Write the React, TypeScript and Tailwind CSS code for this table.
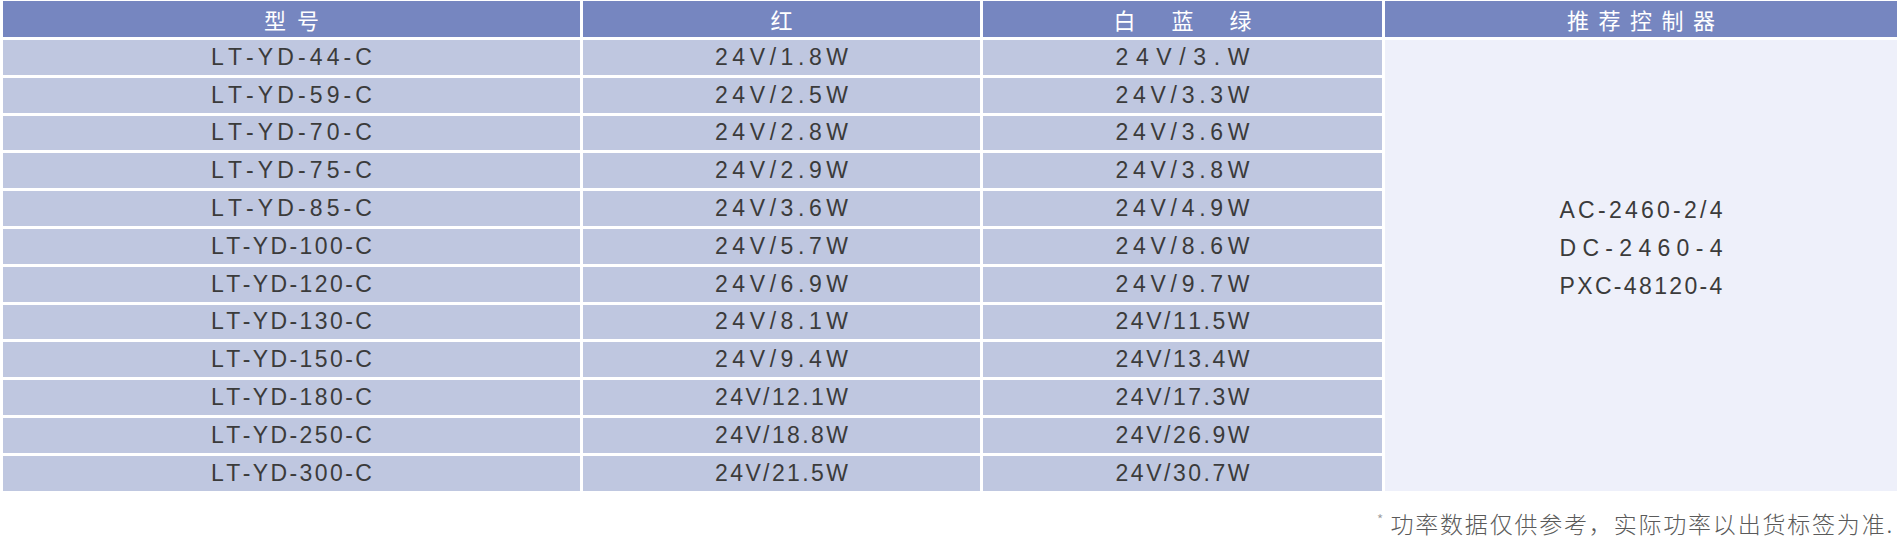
const ROWS = [
  { model: 'LT-YD-44-C', red: '24V/1.8W', rgb: '24V/3.W' },
  { model: 'LT-YD-59-C', red: '24V/2.5W', rgb: '24V/3.3W' },
  { model: 'LT-YD-70-C', red: '24V/2.8W', rgb: '24V/3.6W' },
  { model: 'LT-YD-75-C', red: '24V/2.9W', rgb: '24V/3.8W' },
  { model: 'LT-YD-85-C', red: '24V/3.6W', rgb: '24V/4.9W' },
  { model: 'LT-YD-100-C', red: '24V/5.7W', rgb: '24V/8.6W' },
  { model: 'LT-YD-120-C', red: '24V/6.9W', rgb: '24V/9.7W' },
  { model: 'LT-YD-130-C', red: '24V/8.1W', rgb: '24V/11.5W' },
  { model: 'LT-YD-150-C', red: '24V/9.4W', rgb: '24V/13.4W' },
  { model: 'LT-YD-180-C', red: '24V/12.1W', rgb: '24V/17.3W' },
  { model: 'LT-YD-250-C', red: '24V/18.8W', rgb: '24V/26.9W' },
  { model: 'LT-YD-300-C', red: '24V/21.5W', rgb: '24V/30.7W' },
]

const CONTROLLERS = ['AC-2460-2/4', 'DC-2460-4', 'PXC-48120-4']

const BODY_FONT = "font-['Liberation_Sans',Arial,sans-serif]"
const CJK_FONT = "font-['Noto_Sans_CJK_SC',sans-serif]"

// 원본은 글자를 고정 폭에 맞춰 벌려 놓음 → 글자마다 span, justify-between
function Spread({ text, className }: { text: string; className: string }) {
  return (
    <span className={`flex justify-between ${className}`}>
      {text.split('').map((c, i) => (
        <span key={i}>{c}</span>
      ))}
    </span>
  )
}

function HeadCell({ children }: { children: React.ReactNode }) {
  return (
    <div className={`flex items-center justify-center bg-[#7686c0] text-[22px] leading-none text-white ${CJK_FONT}`}>
      {children}
    </div>
  )
}

function BodyCell({ text, width }: { text: string; width: string }) {
  return (
    <div className="flex items-center justify-center bg-[#bfc7e0] text-[23px] leading-none text-[#3b3b3b]">
      <Spread text={text} className={width} />
    </div>
  )
}

export default function App() {
  return (
    <div className={`w-[1900px] bg-white ${BODY_FONT}`}>
      <div className="ml-[3px] mt-[1px] grid grid-cols-[577px_397px_399px_512px] grid-rows-[36px_repeat(12,34.8px)] gap-x-[3px] gap-y-[3px]">
        <HeadCell>
          <Spread text="型号" className="w-[55px]" />
        </HeadCell>
        <HeadCell>红</HeadCell>
        <HeadCell>
          <Spread text="白蓝绿" className="w-[138px]" />
        </HeadCell>
        <HeadCell>
          <Spread text="推荐控制器" className="w-[148px]" />
        </HeadCell>

        {ROWS.map((r, i) => (
          <div key={r.model} className="contents">
            <BodyCell text={r.model} width="w-[161px]" />
            <BodyCell text={r.red} width="w-[133px]" />
            <BodyCell text={r.rgb} width="w-[134px]" />
            {/* 추천 컨트롤러: 전체 행을 하나로 합친 칸 */}
            {i === 0 && (
              <div className="row-span-12 flex flex-col items-center justify-center bg-[#eef0fa] pb-[34px] text-[23px] leading-[38px] text-[#3b3b3b]">
                {CONTROLLERS.map((c) => (
                  <Spread key={c} text={c} className="w-[163px]" />
                ))}
              </div>
            )}
          </div>
        ))}
      </div>

      <div className={`mt-[19px] flex justify-end pr-[6px] text-[23px] leading-[26px] font-light text-[#5a5a5a] ${CJK_FONT}`}>
        <span className="mr-[7px] mt-[2px] self-start text-[15px] leading-none text-[#999]">*</span>
        <span className="tracking-[1.8px]">功率数据仅供参考，实际功率以出货标签为准.</span>
      </div>
    </div>
  )
}
